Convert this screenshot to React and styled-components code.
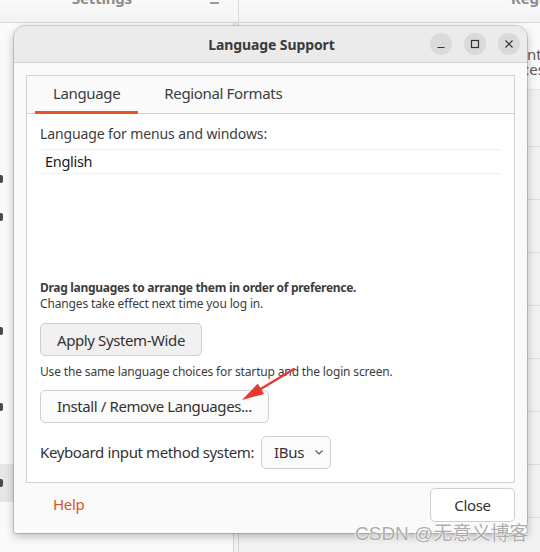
import React from "react";
import styled, { createGlobalStyle } from "styled-components";

const GlobalStyle = createGlobalStyle`
  html, body { margin: 0; padding: 0; }
  body {
    font-family: "Noto Sans", "Open Sans", sans-serif;
    background: #f6f6f6;
  }
`;

// left sidebar of the Settings window behind; only a sliver shows
const sidebarRows = [
  { mark: false },
  { mark: true },
  { mark: true },
  { mark: false },
  { mark: false },
  { mark: true },
  { mark: false },
  { mark: true },
  { mark: false },
  { mark: true, active: true },
  { mark: false },
];

const bgRows = [0, 1, 2, 3, 4, 5, 6, 7];

const App = () => {
  return (
    <Desktop>
      <GlobalStyle />

      {/* Settings window behind the dialog */}
      <BgWindow>
        <BgHeader>
          <BgSide>
            <BgTitle>Settings</BgTitle>
            <BgMin />
          </BgSide>
          <BgMainHead>
            <BgTitle>Region &amp; Language</BgTitle>
          </BgMainHead>
        </BgHeader>
        <BgBody>
          <BgSidebar>
            {sidebarRows.map((row, i) => (
              <BgRow key={i} $active={row.active}>
                {row.mark && <BgIcon />}
              </BgRow>
            ))}
          </BgSidebar>
          <BgMain>
            <BgIntro>
              <BgText>Inte</BgText>
              <BgText>ces</BgText>
            </BgIntro>
            <BgList>
              {bgRows.map((i) => (
                <BgListRow key={i} />
              ))}
            </BgList>
          </BgMain>
        </BgBody>
      </BgWindow>

      {/* Language Support dialog */}
      <Dialog>
        <HeaderBar>
          <Title>Language Support</Title>
          <WinButtons>
            <WinButton aria-label="minimize">
              <svg width="10" height="10" viewBox="0 0 10 10">
                <path d="M1.5 8.5h7" stroke="#333" strokeWidth="1.2" />
              </svg>
            </WinButton>
            <WinButton aria-label="maximize">
              <svg width="10" height="10" viewBox="0 0 10 10">
                <rect x="1.5" y="1.5" width="7" height="7" fill="none" stroke="#333" strokeWidth="1.2" />
              </svg>
            </WinButton>
            <WinButton aria-label="close">
              <svg width="10" height="10" viewBox="0 0 10 10">
                <path d="M1.5 1.5l7 7M8.5 1.5l-7 7" stroke="#333" strokeWidth="1.2" />
              </svg>
            </WinButton>
          </WinButtons>
        </HeaderBar>

        <DialogBody>
          <Notebook>
            <Tabs>
              <Tab $active>Language</Tab>
              <Tab>Regional Formats</Tab>
            </Tabs>
            <TabContent>
              <Label>Language for menus and windows:</Label>
              <LangList>
                <LangItem>English</LangItem>
              </LangList>
              <Hint $bold>Drag languages to arrange them in order of preference.</Hint>
              <Hint>Changes take effect next time you log in.</Hint>
              <Button $grey $top={12}>Apply System-Wide</Button>
              <Hint $top={8}>Use the same language choices for startup and the login screen.</Hint>
              <Button $top={10}>Install / Remove Languages...</Button>
              <KeyboardRow>
                <RowLabel>Keyboard input method system:</RowLabel>
                <Dropdown>
                  IBus
                  <svg width="12" height="8" viewBox="0 0 12 8">
                    <path d="M2.5 2.5l3.5 3.5 3.5-3.5" fill="none" stroke="#555" strokeWidth="1.1" />
                  </svg>
                </Dropdown>
              </KeyboardRow>
            </TabContent>
          </Notebook>
          <Footer>
            <HelpLink>Help</HelpLink>
            <CloseButton>Close</CloseButton>
          </Footer>
        </DialogBody>
      </Dialog>

      <Arrow width="75" height="50" viewBox="0 0 75 50">
        <path d="M64 9 L29 30" stroke="#e8372e" strokeWidth="2.4" strokeLinecap="round" />
        <path d="M12 40 L27.8 23.6 L34 33.9 Z" fill="#e8372e" />
      </Arrow>

      <Watermark>CSDN @无意义博客</Watermark>
    </Desktop>
  );
};

export default App;

// Styled Components
const Desktop = styled.div`
  position: relative;
  width: 540px;
  height: 552px;
  overflow: hidden;
  background: #f6f6f6;
`;

const BgWindow = styled.div`
  display: flex;
  flex-direction: column;
  width: 100%;
  height: 100%;
  background: #f2f2f2;
`;

const BgHeader = styled.div`
  display: flex;
  height: 22px;
  flex-shrink: 0;
  border-bottom: 1px solid #d9d9d9;
  background: linear-gradient(#fafafa, #f3f3f3);
  box-shadow: 0 1px 2px rgba(0, 0, 0, 0.06);
`;

const BgSide = styled.div`
  width: 239px;
  flex-shrink: 0;
  display: flex;
  align-items: flex-start;
  justify-content: space-between;
  padding: 0 19px 0 72px;
  box-sizing: border-box;
  border-right: 1px solid #dcdcdc;
`;

const BgMainHead = styled.div`
  flex: 1;
  padding-left: 272px;
  white-space: nowrap;
  overflow: hidden;
`;

const BgTitle = styled.div`
  margin-top: -12px;
  font-size: 15px;
  font-weight: bold;
  letter-spacing: -0.2px;
  color: #8c8c8c;
  white-space: nowrap;
`;

const BgMin = styled.div`
  width: 9px;
  height: 2px;
  margin-top: 2px;
  background: #9a9a9a;
`;

const BgBody = styled.div`
  flex: 1;
  display: flex;
`;

const BgSidebar = styled.div`
  width: 234px;
  flex-shrink: 0;
  display: flex;
  flex-direction: column;
  padding-top: 99px;
  box-sizing: border-box;
  background: #fafafa;
  border-right: 1px solid #d6d6d6;
`;

const BgRow = styled.div`
  height: 38px;
  flex-shrink: 0;
  display: flex;
  align-items: center;
  background: ${(p) => (p.$active ? "#e6e6e6" : "transparent")};
`;

const BgIcon = styled.div`
  width: 3px;
  height: 8px;
  border-radius: 0 2px 2px 0;
  background: #4a4a4a;
`;

const BgMain = styled.div`
  flex: 1;
  display: flex;
  flex-direction: column;
  margin-left: 4px;
  border-left: 1px solid #d6d6d6;
  background: #f2f2f2;
`;

const BgIntro = styled.div`
  height: 67px;
  box-sizing: border-box;
  padding: 24px 0 0 283px;
  background: #fafafa;
  font-size: 15px;
  color: #5a5a5a;
  border-bottom: 1px solid #e4e4e4;
`;

const BgText = styled.div`
  line-height: 15px;
  white-space: nowrap;
`;

const BgList = styled.div`
  display: flex;
  flex-direction: column;
  padding-top: 56px;
`;

const BgListRow = styled.div`
  height: 52px;
  flex-shrink: 0;
  border-top: 1px solid #dddddd;
`;

const Dialog = styled.div`
  position: absolute;
  left: 14px;
  top: 26px;
  width: 513px;
  height: 507px;
  display: flex;
  flex-direction: column;
  background: #fafafa;
  border-radius: 12px 12px 2px 2px;
  box-shadow: 0 0 0 1px rgba(0, 0, 0, 0.14), 0 3px 10px rgba(0, 0, 0, 0.28);
  overflow: hidden;
`;

const HeaderBar = styled.div`
  position: relative;
  height: 36px;
  flex-shrink: 0;
  display: flex;
  align-items: center;
  justify-content: center;
  background: #ebebeb;
  border-bottom: 1px solid #d3d3d3;
`;

const Title = styled.div`
  font-size: 14px;
  font-weight: bold;
  letter-spacing: -0.1px;
  color: #3a3a3a;
  padding-left: 2px;
`;

const WinButtons = styled.div`
  position: absolute;
  right: 7px;
  top: 7px;
  display: flex;
  gap: 12px;
`;

const WinButton = styled.div`
  width: 22px;
  height: 22px;
  border-radius: 50%;
  background: #dadada;
  display: flex;
  align-items: center;
  justify-content: center;
`;

const DialogBody = styled.div`
  flex: 1;
  display: flex;
  flex-direction: column;
  padding: 12px 12px 0 12px;
`;

const Notebook = styled.div`
  display: flex;
  flex-direction: column;
  border: 1px solid #d2d2d2;
  background: #fff;
`;

const Tabs = styled.div`
  display: flex;
  gap: 8px;
  height: 37px;
  padding-left: 8px;
  background: #fafafa;
  border-bottom: 1px solid #d2d2d2;
`;

const Tab = styled.div`
  display: flex;
  align-items: center;
  padding: 0 18px 5px;
  font-size: 15px;
  letter-spacing: -0.35px;
  color: #3d3d3d;
  box-shadow: ${(p) => (p.$active ? "inset 0 -3px 0 #e95420" : "none")};
  margin-bottom: -1px;
`;

const TabContent = styled.div`
  display: flex;
  flex-direction: column;
  align-items: flex-start;
  padding: 10px 13px 13px;
  height: 368px;
  box-sizing: border-box;
`;

const Label = styled.div`
  font-size: 14px;
  line-height: 20px;
  letter-spacing: -0.12px;
  color: #3d3d3d;
`;

const LangList = styled.div`
  align-self: stretch;
  height: 131px;
  margin-top: 5px;
`;

const LangItem = styled.div`
  height: 23px;
  line-height: 23px;
  padding-left: 5px;
  font-size: 14.5px;
  letter-spacing: -0.3px;
  color: #1a1a1a;
  border-top: 1px solid #f0f0f0;
  border-bottom: 1px solid #f0f0f0;
`;

const Hint = styled.div`
  margin-top: ${(p) => (p.$top ? `${p.$top}px` : "0")};
  font-size: 12px;
  line-height: 15.5px;
  letter-spacing: ${(p) => (p.$bold ? "-0.3px" : "-0.15px")};
  color: #3d3d3d;
  font-weight: ${(p) => (p.$bold ? "bold" : "normal")};
`;

const Button = styled.div`
  margin-top: ${(p) => `${p.$top}px`};
  height: 33px;
  box-sizing: border-box;
  display: flex;
  align-items: center;
  padding: 0 16px;
  font-size: 15px;
  letter-spacing: -0.4px;
  color: #333;
  background: ${(p) => (p.$grey ? "#f0f0f0" : "#fbfbfb")};
  border: 1px solid #cfcfcf;
  border-radius: 5px;
`;

const KeyboardRow = styled.div`
  margin-top: 13px;
  display: flex;
  align-items: center;
  gap: 7px;
`;

const RowLabel = styled.div`
  font-size: 15px;
  letter-spacing: -0.38px;
  color: #333;
`;

const Dropdown = styled.div`
  height: 33px;
  width: 70px;
  box-sizing: border-box;
  display: flex;
  align-items: center;
  gap: 9px;
  padding-left: 12px;
  font-size: 15px;
  letter-spacing: -0.3px;
  color: #333;
  background: #fbfbfb;
  border: 1px solid #cfcfcf;
  border-radius: 5px;
`;

const Footer = styled.div`
  display: flex;
  align-items: center;
  justify-content: space-between;
  padding: 5px 0 0 27px;
`;

const HelpLink = styled.div`
  font-size: 15px;
  letter-spacing: -0.3px;
  color: #d9541e;
  margin-top: -2px;
`;

const CloseButton = styled.div`
  width: 85px;
  height: 34px;
  box-sizing: border-box;
  display: flex;
  align-items: center;
  justify-content: center;
  font-size: 15px;
  letter-spacing: -0.3px;
  color: #333;
  background: #fff;
  border: 1px solid #cfcfcf;
  border-radius: 5px;
`;

const Arrow = styled.svg`
  position: absolute;
  left: 230px;
  top: 360px;
`;

const Watermark = styled.div`
  position: absolute;
  left: 355px;
  top: 518px;
  font-family: "Liberation Sans", "Noto Sans CJK SC", sans-serif;
  font-size: 19px;
  color: rgba(150, 150, 150, 0.8);
  text-shadow: 0 0 2px #fff, 0 0 2px #fff;
  white-space: nowrap;
`;
